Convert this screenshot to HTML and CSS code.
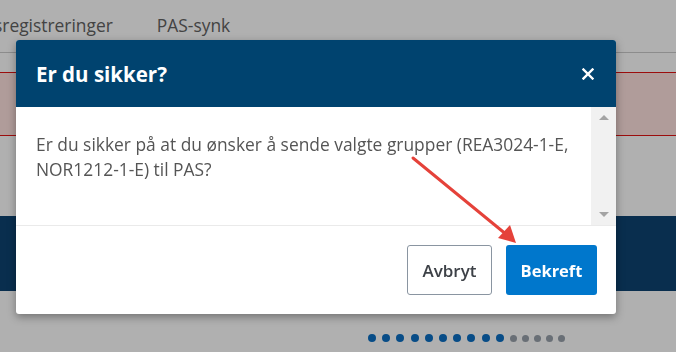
FILE: index.html
```html
<!DOCTYPE html>
<html lang="no">
<head>
    <meta charset="UTF-8">
    <title>Er du sikker?</title>
    <link rel="stylesheet" href="styles.css">
</head>
<body>

    <div class="page">
        <nav class="tabs">
            <span class="tab tab-first">sregistreringer</span>
            <span class="tab">PAS-synk</span>
        </nav>

        <div class="alert"></div>

        <div class="band"></div>

        <div class="dots">
            <span class="dot on"></span><span class="dot on"></span><span class="dot on"></span><span class="dot on"></span><span class="dot on"></span>
            <span class="dot on"></span><span class="dot on"></span><span class="dot on"></span><span class="dot on"></span><span class="dot on"></span>
            <span class="dot"></span><span class="dot"></span><span class="dot"></span><span class="dot"></span><span class="dot"></span>
        </div>
    </div>

    <div class="backdrop"></div>

    <div class="modal">
        <div class="modal-header">
            <h2>Er du sikker?</h2>
            <button class="close" aria-label="Lukk">
                <svg width="12" height="12" viewBox="0 0 12 12">
                    <path d="M1.5 1.5 L10.5 10.5 M10.5 1.5 L1.5 10.5" stroke="#fff" stroke-width="2.4" stroke-linecap="square"/>
                </svg>
            </button>
        </div>
        <div class="modal-body">
            <div class="modal-text">
                Er du sikker på at du ønsker å sende valgte grupper (REA3024-1-E, NOR1212-1-E) til PAS?
            </div>
            <div class="scrollbar">
                <span class="arrow up"></span>
                <span class="arrow down"></span>
            </div>
        </div>
        <div class="modal-footer">
            <button class="btn btn-cancel">Avbryt</button>
            <button class="btn btn-confirm">Bekreft</button>
        </div>
    </div>

    <svg class="pointer" width="676" height="352" viewBox="0 0 676 352">
        <line x1="413" y1="158" x2="507" y2="235" stroke="#e5423a" stroke-width="3" stroke-linecap="round"/>
        <polygon points="516,243 498,238 510,225" fill="#e5423a"/>
    </svg>

</body>
</html>
```

FILE: styles.css
```css
body {
    margin: 0;
    font-family: "Open Sans", "Liberation Sans", sans-serif;
    background-color: #fff;
    color: #555;
    overflow: hidden;
}

.page {
    width: 676px;
    height: 352px;
}

.tabs {
    display: flex;
    gap: 44px;
    height: 53px;
    padding-top: 13px;
    box-sizing: border-box;
    border-bottom: 1px solid #cbcbcb;
    font-size: 17.4px;
    color: #626262;
}

.tab-first {
    margin-left: -6px;
}

.alert {
    margin-top: 19px;
    height: 62px;
    background-color: #ffe3df;
    border-top: 1px solid #e31414;
    border-bottom: 1px solid #e31414;
}

.band {
    margin-top: 80px;
    height: 75px;
    background-color: #0e4371;
}

.dots {
    display: flex;
    align-items: center;
    margin-top: 43px;
    padding-left: 368px;
}

.dot {
    width: 7px;
    height: 7px;
    margin-right: 5px;
    border-radius: 50%;
    background-color: #98a1ab;
}

.dot.on {
    width: 8px;
    height: 8px;
    margin-right: 6.2px;
    background-color: #0b6fc4;
}

.backdrop {
    position: fixed;
    inset: 0;
    background-color: rgba(0, 0, 0, 0.31);
}

.modal {
    position: absolute;
    left: 16px;
    top: 40px;
    width: 600px;
    background-color: #fff;
    border-radius: 3px;
    box-shadow: 0 3px 9px rgba(0, 0, 0, 0.35);
    overflow: hidden;
}

.modal-header {
    display: flex;
    align-items: center;
    justify-content: space-between;
    height: 67px;
    padding: 0 22px 0 20px;
    background-color: #00436f;
}

.modal-header h2 {
    margin: 0;
    font-size: 20.5px;
    font-weight: 700;
    color: #fff;
}

.close {
    display: flex;
    padding: 0;
    border: none;
    background: none;
    margin-top: 1px;
}

.modal-body {
    display: flex;
    height: 118px;
    border-bottom: 1px solid #eaeaea;
}

.modal-text {
    flex: 1;
    padding: 25px 20px 0 20px;
    font-size: 17.4px;
    line-height: 25px;
    color: #555;
}

.scrollbar {
    display: flex;
    flex-direction: column;
    justify-content: space-between;
    align-items: center;
    width: 25px;
    padding: 8px 0;
    box-sizing: border-box;
    background-color: #f1f1f1;
}

.arrow {
    width: 0;
    height: 0;
    border-left: 5px solid transparent;
    border-right: 5px solid transparent;
}

.arrow.up {
    border-bottom: 5px solid #a3a3a3;
}

.arrow.down {
    border-top: 5px solid #a3a3a3;
}

.modal-footer {
    display: flex;
    justify-content: flex-end;
    gap: 14px;
    padding: 19px 19px 19px 20px;
}

.btn {
    height: 50px;
    border-radius: 3px;
    font-family: "Open Sans", "Liberation Sans", sans-serif;
    font-size: 17px;
    cursor: pointer;
}

.btn-cancel {
    width: 85px;
    border: 1px solid #8a95a1;
    background-color: #fff;
    color: #3d4147;
    font-weight: 600;
}

.btn-confirm {
    width: 91px;
    border: none;
    background-color: #0077cc;
    color: #fff;
    font-weight: 700;
    font-size: 16.5px;
}

.pointer {
    position: absolute;
    left: 0;
    top: 0;
}
```
